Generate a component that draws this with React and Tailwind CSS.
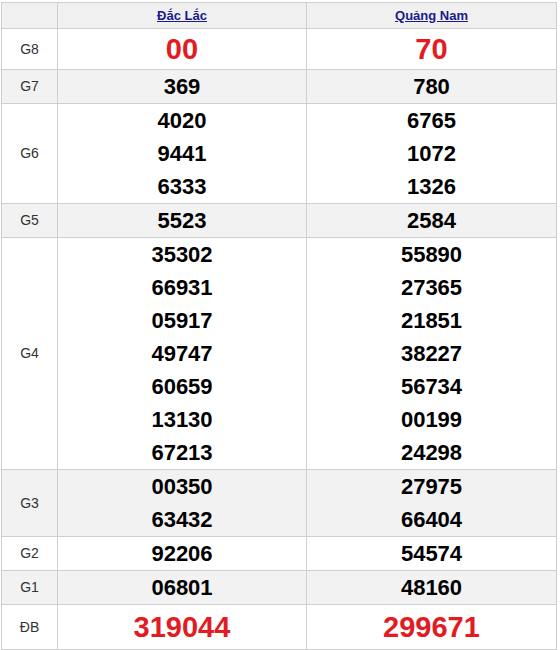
const rows = [
  { label: "G8", h: "h-[41px]", a: ["00"], b: ["70"], big: true },
  { label: "G7", h: "h-[34px]", a: ["369"], b: ["780"], alt: true },
  { label: "G6", h: "h-[100px]", a: ["4020", "9441", "6333"], b: ["6765", "1072", "1326"] },
  { label: "G5", h: "h-[34px]", a: ["5523"], b: ["2584"], alt: true },
  {
    label: "G4",
    h: "h-[232px]",
    a: ["35302", "66931", "05917", "49747", "60659", "13130", "67213"],
    b: ["55890", "27365", "21851", "38227", "56734", "00199", "24298"],
  },
  { label: "G3", h: "h-[67px]", a: ["00350", "63432"], b: ["27975", "66404"], alt: true },
  { label: "G2", h: "h-[34px]", a: ["92206"], b: ["54574"] },
  { label: "G1", h: "h-[34px]", a: ["06801"], b: ["48160"], alt: true },
  { label: "ĐB", h: "h-[45px]", a: ["319044"], b: ["299671"], big: true },
];

function Nums({ items, big }) {
  return (
    <div className="flex flex-col items-center">
      {items.map((n, i) =>
        big ? (
          <div key={i} className="text-[29px] font-bold leading-[34px] text-[#e31b23]">
            {n}
          </div>
        ) : (
          <div key={i} className="text-[22px] font-bold leading-[33px] text-black">
            {n}
          </div>
        )
      )}
    </div>
  );
}

export default function App() {
  return (
    <div className="bg-white pl-px pt-[2px] font-['Liberation_Sans',Arial,sans-serif]">
      <div className="w-[556px] border-l border-t border-[#cfcfcf]">
        <div className="flex h-[26px] bg-[#f0f0f0]">
          <div className="w-[56px] border-r border-b border-[#cfcfcf]" />
          <div className="flex w-[249px] items-center justify-center border-r border-b border-[#cfcfcf]">
            <a href="#" className="text-[13px] font-bold text-[#1a1a8c] underline">Đắc Lắc</a>
          </div>
          <div className="flex w-[250px] items-center justify-center border-r border-b border-[#cfcfcf]">
            <a href="#" className="text-[13px] font-bold text-[#1a1a8c] underline">Quảng Nam</a>
          </div>
        </div>
        {rows.map((r) => (
          <div key={r.label} className={`flex ${r.h} ${r.alt ? "bg-[#f2f2f2]" : "bg-white"}`}>
            <div className="flex w-[56px] items-center justify-center border-r border-b border-[#cfcfcf] text-[14px] text-[#333]">
              {r.label}
            </div>
            <div className="flex w-[249px] items-center justify-center border-r border-b border-[#cfcfcf]">
              <Nums items={r.a} big={r.big} />
            </div>
            <div className="flex w-[250px] items-center justify-center border-r border-b border-[#cfcfcf]">
              <Nums items={r.b} big={r.big} />
            </div>
          </div>
        ))}
      </div>
    </div>
  );
}
